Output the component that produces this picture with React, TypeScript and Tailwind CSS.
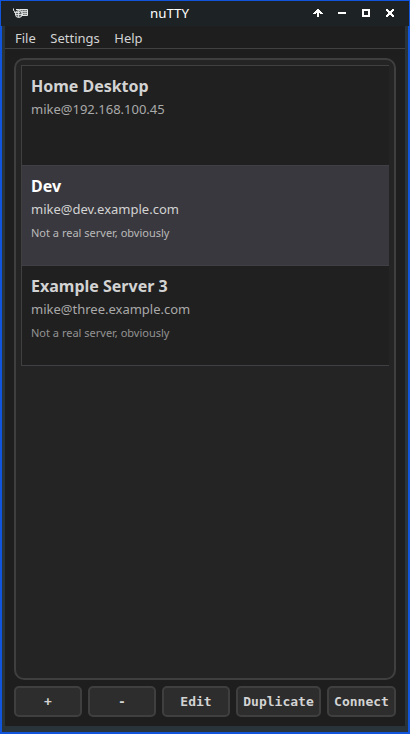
import React from 'react';

type Server = { name: string; address: string; note?: string };

const servers: Server[] = [
  { name: 'Home Desktop', address: 'mike@192.168.100.45' },
  { name: 'Dev', address: 'mike@dev.example.com', note: 'Not a real server, obviously' },
  { name: 'Example Server 3', address: 'mike@three.example.com', note: 'Not a real server, obviously' },
];

const buttons = [
  { label: '+', width: 'w-[68px]' },
  { label: '-', width: 'w-[68px]' },
  { label: 'Edit', width: 'w-[68px]' },
  { label: 'Duplicate', width: 'w-[85px]' },
  { label: 'Connect', width: 'w-[69px]' },
];

function AppIcon() {
  return (
    <svg width="16" height="11" viewBox="0 0 16 11" fill="none" stroke="#e6e8e8" strokeWidth="1">
      <path d="M.5.5v2L2.500 4M3 1.500h3" />
      <path d="M6.500 1.500h8v6h-6z" fill="#6f7475" />
      <path d="M7 3.500h7M8 5.500h6" strokeOpacity=".75" />
      <path d="M9.500 2v5M12 2v5" strokeOpacity=".4" />
      <ellipse cx="5.800" cy="6" rx="3.400" ry="3.500" fill="#5d6264" />
      <path d="M1 4.500h6M2 6.500h8M5.500 3v6" strokeOpacity=".85" />
    </svg>
  );
}

function WindowControls() {
  return (
    <div className="mb-px flex items-center gap-3 pr-[13px] text-white">
      <svg width="12" height="12" viewBox="0 0 12 12" fill="currentColor" shapeRendering="crispEdges">
        <path d="M5 2h2v1h1v1h1v1h1v1h1v1H8V6H7v4H5V6H4v1H1V6h1V5h1V4h1V3h1z" />
      </svg>
      <svg width="12" height="12" viewBox="0 0 12 12" fill="currentColor" shapeRendering="crispEdges">
        <path d="M2 5h8v2H2z" />
      </svg>
      <svg width="12" height="12" viewBox="0 0 12 12" fill="currentColor" fillRule="evenodd" shapeRendering="crispEdges">
        <path d="M2 2h8v8H2zM4 4v4h4V4z" />
      </svg>
      <svg width="12" height="12" viewBox="0 0 12 12" fill="currentColor" shapeRendering="crispEdges">
        <path d="M2 2h2v1h1v1h2V3h1V2h2v2H9v1H8v2h1v1h1v2H8V9H7V8H5v1H4v1H2V8h1V7h1V5H3V4H2z" />
      </svg>
    </div>
  );
}

export default function App() {
  return (
    <div className="flex h-[734px] w-[410px] flex-col overflow-hidden bg-[#1155dd] pt-px font-['Noto_Sans',sans-serif]">
      <header className="mx-px grid h-[25px] shrink-0 grid-cols-[1fr_auto_1fr] items-center bg-[#1d2224]">
        <div className="pl-[12px]"><AppIcon /></div>
        <h1 className="mb-px pr-[71px] text-[13.33px] leading-[22px] font-normal text-white">nuTTY</h1>
        <div className="flex justify-end"><WindowControls /></div>
      </header>
      <div className="mx-[2px] mb-[2px] flex min-h-0 flex-1 flex-col bg-[#29343a] px-[3px] pb-[6px]">
        <main className="flex min-h-0 flex-1 flex-col bg-[#1e1e1e]">
          <nav className="flex h-[23px] shrink-0 gap-[14.5px] border-b border-[#414141] pl-[10px] text-[13px] leading-[24px] text-[#d3d3d3]">
            <span>File</span><span>Settings</span><span>Help</span>
          </nav>
          <section className="mx-[9px] mt-[9px] h-[622px] shrink-0 rounded-[10px] border-2 border-[#3f3f3f] bg-[#242424] p-[5px]">
            <ul className="border-t border-l border-[#404040]">
              {servers.map((s, i) => (
                <li
                  key={s.name}
                  className={`h-[100px] border-b border-[#404044] pl-[9px] ${i === 1 ? 'bg-[#39383e]' : 'bg-[#202020]'}`}
                >
                  <h2 className={`pt-[8px] text-[16px] leading-[24px] font-bold ${i === 2 ? '' : 'tracking-[-0.02px]'} ${i === 1 ? 'text-white' : 'text-[#d3d3d3]'}`}>{s.name}</h2>
                  <p className={`text-[13px] leading-[22px] ${i === 1 ? 'text-[#d3d3d3]' : 'text-[#a9a9a9]'}`}>{s.address}</p>
                  <p className={`pt-[3px] text-[11px] leading-[20px] ${i === 1 ? 'text-[#bababa]' : 'text-[#939393]'}`}>{s.note}</p>
                </li>
              ))}
            </ul>
          </section>
          <div className="mx-[9px] mt-[6px] flex gap-[6px]">
            {buttons.map((b) => (
              <button
                key={b.label}
                className={`flex h-[31px] shrink-0 items-center justify-center rounded-[5px] border-2 border-[#3f3f3f] bg-[#2d2d2d] font-['DejaVu_Sans_Mono',monospace] text-[13px] font-bold text-[#d3d3d3] ${b.width}`}
              >
                {b.label}
              </button>
            ))}
          </div>
        </main>
      </div>
    </div>
  );
}
